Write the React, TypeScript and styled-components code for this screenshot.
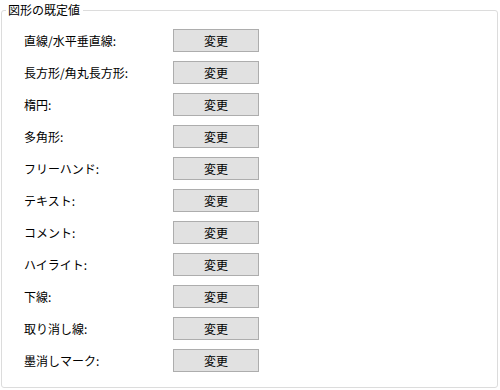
import React, { FC } from 'react';
import styled, { createGlobalStyle } from 'styled-components';

const GlobalStyle = createGlobalStyle`
  html, body {
    margin: 0;
    padding: 0;
    background: #ffffff;
  }
  body {
    font-family: "Noto Sans CJK JP", "Noto Sans", sans-serif;
    font-size: 12px;
    color: #000;
  }
`;

const labels = [
  '直線/水平垂直線:',
  '長方形/角丸長方形:',
  '楕円:',
  '多角形:',
  'フリーハンド:',
  'テキスト:',
  'コメント:',
  'ハイライト:',
  '下線:',
  '取り消し線:',
  '墨消しマーク:',
];

const StyledGroup = styled.fieldset`
  box-sizing: border-box;
  width: 497px;
  height: 386px;
  margin: 2px 0 0 1px;
  padding: 0;
  border: 1px solid #dcdcdc;
  border-radius: 3px;
`;

const StyledLegend = styled.legend`
  margin-left: 4px;
  padding: 0 3px 0 2px;
  font-size: 12px;
  line-height: 16px;
  color: #000;
`;

const StyledGrid = styled.div`
  display: grid;
  grid-template-columns: 149px 86px;
  grid-auto-rows: 23px;
  row-gap: 9px;
  align-items: center;
  padding: 11px 0 0 22px;
`;

const StyledLabel = styled.span`
  font-size: 12px;
  line-height: 16px;
  white-space: nowrap;
`;

const StyledButton = styled.button`
  box-sizing: border-box;
  width: 86px;
  height: 23px;
  margin: 0;
  padding: 0;
  background: #e1e1e1;
  border: 1px solid #adadad;
  border-radius: 0;
  font-family: inherit;
  font-size: 12px;
  line-height: 16px;
  color: #000;
  cursor: pointer;
`;

const App: FC = () => (
  <>
    <GlobalStyle />
    <StyledGroup>
      <StyledLegend>図形の既定値</StyledLegend>
      <StyledGrid>
        {labels.map((label) => (
          <React.Fragment key={label}>
            <StyledLabel>{label}</StyledLabel>
            <StyledButton type="button">変更</StyledButton>
          </React.Fragment>
        ))}
      </StyledGrid>
    </StyledGroup>
  </>
);

export default App;
